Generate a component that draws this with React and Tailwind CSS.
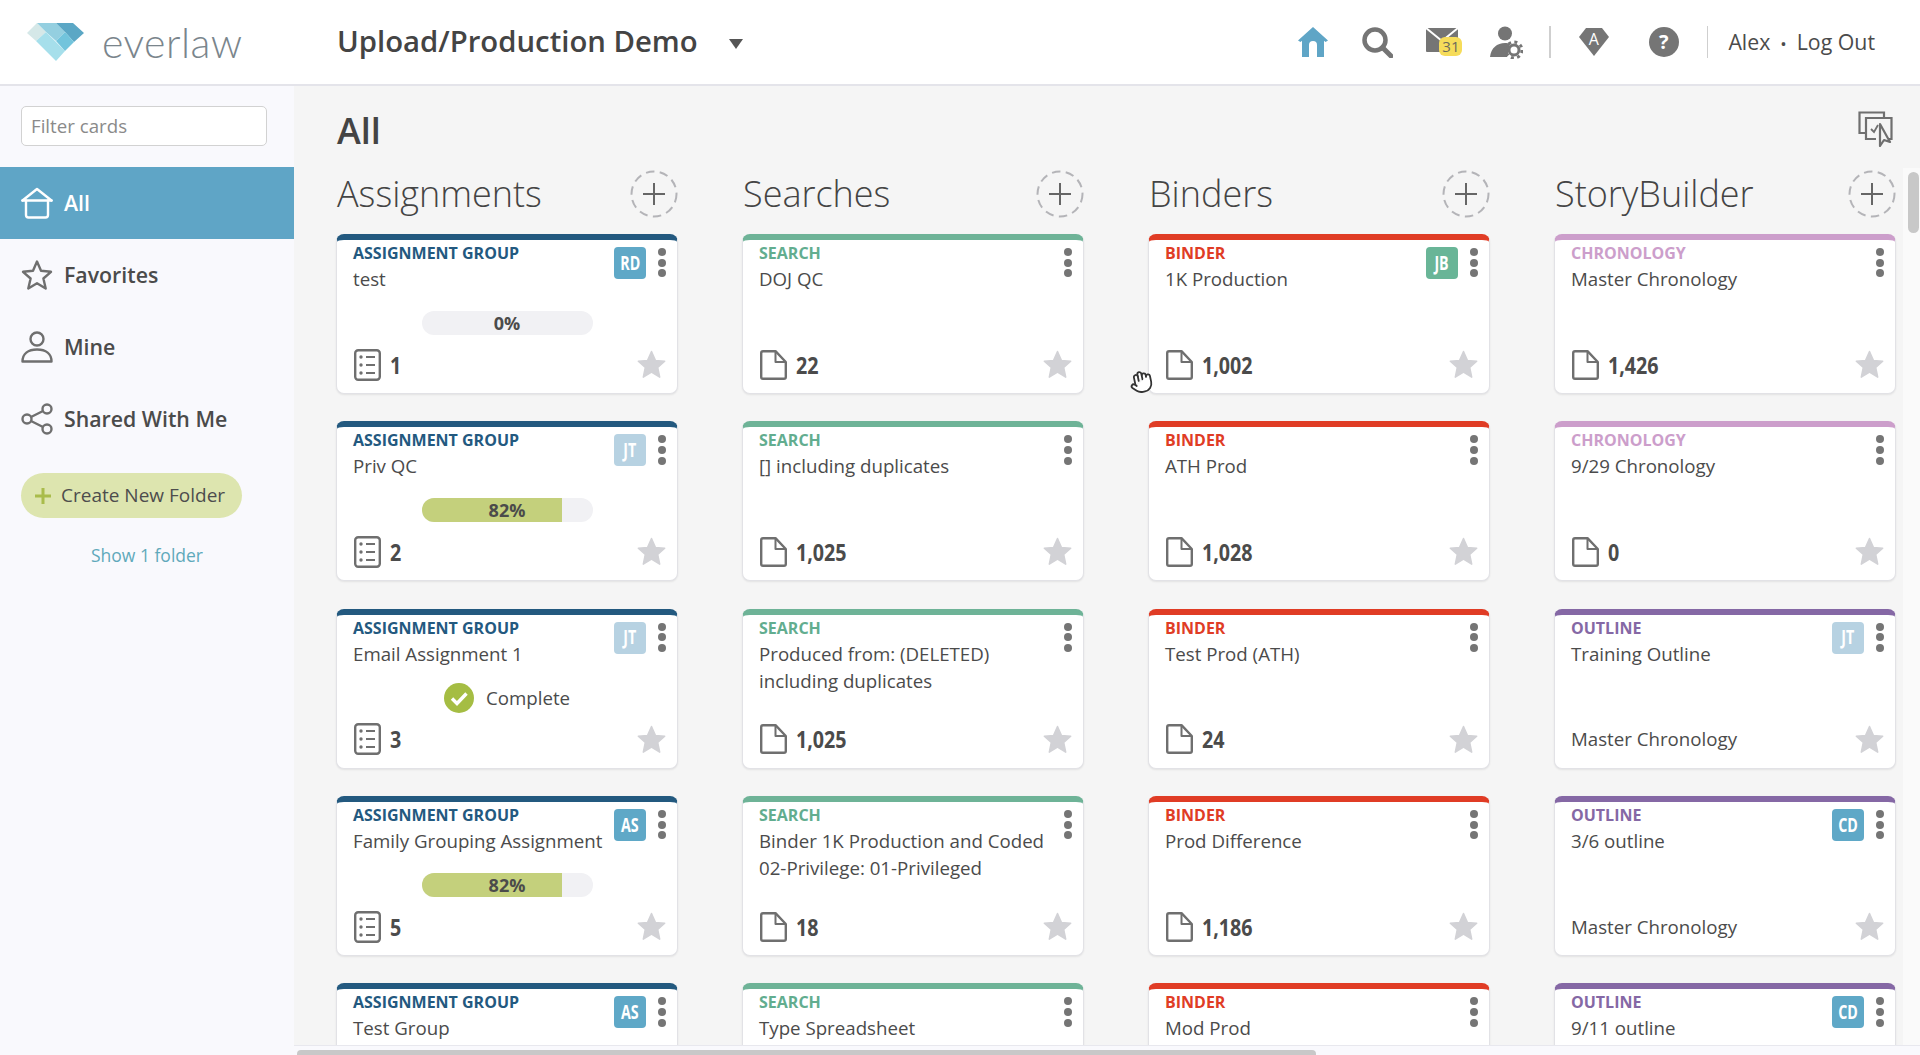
import { Hand } from 'lucide-react';

const columns = [
  {
    title: 'Assignments',
    cards: [
      { type: 'assignment', name: 'test', badge: 'RD', progress: 0, count: '1' },
      { type: 'assignment', name: 'Priv QC', badge: 'JT', progress: 82, count: '2' },
      { type: 'assignment', name: 'Email Assignment 1', badge: 'JT', complete: true, count: '3' },
      { type: 'assignment', name: 'Family Grouping Assignment', badge: 'AS', progress: 82, count: '5' },
      { type: 'assignment', name: 'Test Group', badge: 'AS' },
    ],
  },
  {
    title: 'Searches',
    cards: [
      { type: 'search', name: 'DOJ QC', count: '22' },
      { type: 'search', name: '[] including duplicates', count: '1,025' },
      { type: 'search', name: 'Produced from: (DELETED) including duplicates', count: '1,025' },
      { type: 'search', name: 'Binder 1K Production and Coded 02-Privilege: 01-Privileged', count: '18' },
      { type: 'search', name: 'Type Spreadsheet' },
    ],
  },
  {
    title: 'Binders',
    cards: [
      { type: 'binder', name: '1K Production', badge: 'JB', count: '1,002' },
      { type: 'binder', name: 'ATH Prod', count: '1,028' },
      { type: 'binder', name: 'Test Prod (ATH)', count: '24' },
      { type: 'binder', name: 'Prod Difference', count: '1,186' },
      { type: 'binder', name: 'Mod Prod' },
    ],
  },
  {
    title: 'StoryBuilder',
    cards: [
      { type: 'chronology', name: 'Master Chronology', count: '1,426' },
      { type: 'chronology', name: '9/29 Chronology', count: '0' },
      { type: 'outline', name: 'Training Outline', badge: 'JT', sub: 'Master Chronology' },
      { type: 'outline', name: '3/6 outline', badge: 'CD', sub: 'Master Chronology' },
      { type: 'outline', name: '9/11 outline', badge: 'CD' },
    ],
  },
];

const cardTypes = {
  assignment: { label: 'ASSIGNMENT GROUP', bar: 'border-t-[#23597f]', text: 'text-[#23597f]' },
  search: { label: 'SEARCH', bar: 'border-t-[#6eb397]', text: 'text-[#62ad8f]' },
  binder: { label: 'BINDER', bar: 'border-t-[#e03c25]', text: 'text-[#e03c25]' },
  chronology: { label: 'CHRONOLOGY', bar: 'border-t-[#cc9ecb]', text: 'text-[#cc9ecb]' },
  outline: { label: 'OUTLINE', bar: 'border-t-[#8568a5]', text: 'text-[#8568a5]' },
};

const badgeColors = {
  RD: 'bg-[#5fa8c7]',
  CD: 'bg-[#5fa8c7]',
  AS: 'bg-[#5fa8c7]',
  JT: 'bg-[#b7d2e2]',
  JB: 'bg-[#69b597]',
};

function Logo() {
  return (
    <svg width="57" height="38" viewBox="27 23 57 38">
      <polygon points="27,33 37,23 46,32 36,41" fill="#d5e8e8" />
      <polygon points="37,23 56,23 65,32 56,41 46,32" fill="#94cfe0" />
      <polygon points="56,23 73,23 84,33 74,42 65,32" fill="#5ba7c5" />
      <polygon points="36,41 46,32 65,51 56,61" fill="#a6dfeb" />
      <polygon points="56,41 65,32 74,42 65,51" fill="#72c4dc" />
    </svg>
  );
}

function ListIcon() {
  return (
    <svg width="27" height="32" viewBox="0 0 27 32" fill="none" stroke="#6f6f6f" strokeWidth="2.4">
      <rect x="1.2" y="1.2" width="24.6" height="29.6" rx="3" />
      <path d="M12 8h9M12 16h9M12 24h9" strokeWidth="2" />
      <circle cx="7" cy="8" r="1.7" fill="#6f6f6f" stroke="none" />
      <circle cx="7" cy="16" r="1.7" fill="#6f6f6f" stroke="none" />
      <circle cx="7" cy="24" r="1.7" fill="#6f6f6f" stroke="none" />
    </svg>
  );
}

function FileIcon() {
  return (
    <svg width="27" height="30" viewBox="0 0 27 30" fill="none" stroke="#6f6f6f" strokeWidth="2.4" strokeLinejoin="round">
      <path d="M3 1.2h12.5L25.8 12v15a1.8 1.8 0 0 1-1.8 1.8H3A1.8 1.8 0 0 1 1.2 27V3A1.8 1.8 0 0 1 3 1.2Z" />
      <path d="M15.5 1.2V12h10.3" strokeWidth="2" />
    </svg>
  );
}

function Star() {
  return (
    <svg width="29" height="29" viewBox="0 0 29 29" fill="#d2d2d6" stroke="#d2d2d6" strokeWidth="1.5" strokeLinejoin="round">
      <polygon points="14.5,1.5 18.4,10.4 27.7,11.2 20.7,17.5 22.7,27.2 14.5,22.2 6.3,27.2 8.3,17.5 1.3,11.2 10.6,10.4" />
    </svg>
  );
}

function Kebab() {
  return (
    <div className="flex w-[8px] flex-col gap-[2.6px] pt-[1px]">
      <span className="h-[8px] w-[8px] rounded-full bg-[#757575]" />
      <span className="h-[8px] w-[8px] rounded-full bg-[#757575]" />
      <span className="h-[8px] w-[8px] rounded-full bg-[#757575]" />
    </div>
  );
}

function AddButton() {
  return (
    <svg width="48" height="48" viewBox="0 0 48 48" fill="none">
      <circle cx="24" cy="24" r="22.5" stroke="#b4b4b8" strokeWidth="2" strokeDasharray="8.5 5.4" />
      <path d="M24 13v22M13 24h22" stroke="#666" strokeWidth="2" />
    </svg>
  );
}

function CheckCircle() {
  return (
    <svg width="30" height="30" viewBox="0 0 30 30">
      <circle cx="15" cy="15" r="15" fill="#a5bd43" />
      <path d="M8 15.5l5 5 9.5-10" fill="none" stroke="#fff" strokeWidth="3.4" />
    </svg>
  );
}

function Progress({ value }) {
  return (
    <div className="relative mx-auto h-[24px] w-[171px] overflow-hidden rounded-full bg-[#f1f1f4]">
      <div className="h-full bg-[#c4d07c]" style={{ width: `${value}%` }} />
      <div className="absolute inset-0 flex items-center justify-center text-[18px] font-bold text-[#4b4b4b]">{value}%</div>
    </div>
  );
}

function Card({ card }) {
  const t = cardTypes[card.type];
  return (
    <div className={`flex h-[160px] shrink-0 flex-col rounded-[8px] border border-t-[6px] border-[#e2e2e6] bg-white pl-[16px] pr-[11px] shadow-[0_1px_2px_rgba(0,0,0,0.08)] ${t.bar}`}>
      <div className="flex h-[71px] items-start">
        <div className="min-w-0 flex-1 pt-[2px]">
          <div className={`text-[16px] font-bold leading-[23px] ${t.text}`}>{t.label}</div>
          <div className="text-[18.700px] leading-[27px] text-[#4b4b4b]">{card.name}</div>
        </div>
        <div className="flex shrink-0 items-start gap-[12px] pt-[7px] pl-[6px]">
          {card.badge && (
            <div className={`flex h-[32px] w-[32px] items-center justify-center rounded-[4px] text-[19px] font-bold text-white ${badgeColors[card.badge]}`}>
              <span className="scale-x-[0.75]">{card.badge}</span>
            </div>
          )}
          <Kebab />
        </div>
      </div>
      <div className="h-[24px] pr-[5px]">
        {card.progress !== undefined && <Progress value={card.progress} />}
        {card.complete && (
          <div className="flex h-full items-center justify-center gap-[12px]">
            <CheckCircle />
            <span className="text-[18.700px] text-[#4b4b4b]">Complete</span>
          </div>
        )}
      </div>
      {(card.count || card.sub) && (
        <div className="mt-[13px] flex h-[33px] items-center justify-between">
          {card.sub ? (
            <span className="text-[18.700px] text-[#4b4b4b]">{card.sub}</span>
          ) : (
            <div className="flex items-center gap-[9px] pl-[1px]">
              {card.type === 'assignment' ? <ListIcon /> : <FileIcon />}
              <span className="origin-left scale-x-[0.82] text-[24px] font-bold leading-none text-[#4b4b4b]">{card.count}</span>
            </div>
          )}
          <Star />
        </div>
      )}
    </div>
  );
}

function HomeNav() {
  return (
    <svg width="32" height="32" viewBox="0 0 32 32" fill="none" stroke="#fff" strokeWidth="2.4" strokeLinejoin="round" strokeLinecap="round">
      <path d="M1.5 13.5 16 2l14.500 11.500" />
      <path d="M1.500 13.500h29" />
      <path d="M5 13.500V28a2.500 2.500 0 0 0 2.500 2.500h17A2.500 2.500 0 0 0 27 28V13.500" />
    </svg>
  );
}

function StarNav() {
  return (
    <svg width="32" height="32" viewBox="0 0 32 32" fill="none" stroke="#6f6f6f" strokeWidth="2.4" strokeLinejoin="round">
      <polygon points="16,2.500 20,11.800 30,12.800 22.400,19.500 24.700,29.500 16,24.200 7.300,29.500 9.600,19.500 2,12.800 12,11.800" />
    </svg>
  );
}

function PersonNav() {
  return (
    <svg width="32" height="32" viewBox="0 0 32 32" fill="none" stroke="#6f6f6f" strokeWidth="2.4">
      <circle cx="16" cy="8" r="6.500" />
      <path d="M1.500 30.500C1.500 23 7 18.500 16 18.500S30.500 23 30.500 30.500Z" strokeLinejoin="round" />
    </svg>
  );
}

function ShareNav() {
  return (
    <svg width="32" height="32" viewBox="0 0 32 32" fill="none" stroke="#6f6f6f" strokeWidth="2.4">
      <circle cx="6" cy="16" r="4.500" />
      <circle cx="26" cy="6" r="4.500" />
      <circle cx="26" cy="26" r="4.500" />
      <path d="M10 14 22 8M10 18l12 6" />
    </svg>
  );
}

const navItems = [
  { label: 'All', icon: <HomeNav />, active: true },
  { label: 'Favorites', icon: <StarNav /> },
  { label: 'Mine', icon: <PersonNav /> },
  { label: 'Shared With Me', icon: <ShareNav /> },
];

function Sidebar() {
  return (
    <aside className="flex w-[294px] shrink-0 flex-col bg-[#f9f9fd]">
      <div className="px-[21px] pt-[20px]">
        <div className="flex h-[40px] w-[246px] items-center rounded-[5px] border border-[#d2d2d2] bg-white pl-[9px] text-[18.700px] text-[#8a8a8a]">Filter cards</div>
      </div>
      <nav className="mt-[21px]">
        {navItems.map((n) => (
          <div key={n.label} className={`flex h-[72px] items-center gap-[11px] pl-[21px] text-[21.300px] font-semibold ${n.active ? 'bg-[#5fa5c6] text-white' : 'text-[#4b4b4b]'}`}>
            {n.icon}
            {n.label}
          </div>
        ))}
      </nav>
      <div className="mt-[18px] ml-[21px] flex h-[45px] w-[221px] items-center gap-[10px] rounded-full bg-[#dde5af] pl-[14px] text-[19px] text-[#4d4d4d]">
        <svg width="16" height="16" viewBox="0 0 16 16" stroke="#a9bc4b" strokeWidth="3"><path d="M8 0v16M0 8h16" /></svg>
        Create New Folder
      </div>
      <div className="mt-[24px] text-center text-[17.500px] text-[#5fa9bb]">Show 1 folder</div>
    </aside>
  );
}

function TopIcons() {
  return (
    <div className="ml-auto flex items-center pr-[45px]">
      <svg width="30" height="30" viewBox="0 0 30 30" fill="#5fa5c6">
        <path d="M15 0 30 13.500 27.500 15 26 13.800V30H19V18a4 4 0 0 0-8 0v12H4V13.800L2.500 15 0 13.500Z" />
      </svg>
      <svg className="ml-[34px]" width="31" height="31" viewBox="0 0 31 31" fill="none" stroke="#757575">
        <circle cx="13" cy="13" r="10.500" strokeWidth="4.500" />
        <path d="M20.500 20.500 29 29" strokeWidth="5" strokeLinecap="round" />
      </svg>
      <div className="relative ml-[33px] h-[32px] w-[36px]">
        <svg className="absolute top-[2px] left-0" width="32" height="24" viewBox="0 0 32 24">
          <rect width="32" height="24" fill="#757575" rx="1" />
          <path d="M0 0 16 13 32 0" fill="none" stroke="#fff" strokeWidth="2" />
        </svg>
        <div className="absolute top-[11px] left-[13px] flex h-[19px] w-[23px] items-center justify-center rounded-[6px] bg-[#f6dc5a] text-[15px] text-[#6f6a5a]">31</div>
      </div>
      <svg className="ml-[28px]" width="33" height="33" viewBox="0 0 33 33">
        <circle cx="15" cy="7.500" r="7" fill="#757575" />
        <path d="M0 31C1 22 7 17 15 17c2 0 3.500.3 5 1l-3 13Z" fill="#757575" />
        <circle cx="24" cy="24" r="5" fill="none" stroke="#757575" strokeWidth="3" />
        <circle cx="24" cy="24" r="8" fill="none" stroke="#757575" strokeWidth="3" strokeDasharray="3 3.300" />
      </svg>
      <div className="ml-[26px] h-[32px] w-[1.500px] bg-[#cfcfcf]" />
      <div className="relative ml-[28px] h-[28px] w-[30px]">
        <svg className="absolute inset-0" width="30" height="28" viewBox="0 0 30 28">
          <polygon points="7,0 23,0 30,9 15,28 0,9" fill="#757575" />
        </svg>
        <span className="absolute inset-x-0 top-[1px] text-center text-[16px] leading-[20px] text-white">A</span>
      </div>
      <div className="ml-[40px] flex h-[30px] w-[30px] items-center justify-center rounded-full bg-[#757575] text-[20px] font-bold text-white">?</div>
      <div className="ml-[28px] h-[32px] w-[1.500px] bg-[#cfcfcf]" />
      <div className="ml-[20px] text-[21.300px] text-[#4b4b4b]">
        Alex
        <span className="mx-[10px] text-[17px]">•</span>
        Log Out
      </div>
    </div>
  );
}

export default function App() {
  return (
    <div className="relative flex h-[1055px] w-[1920px] flex-col overflow-hidden bg-white font-['Open_Sans',sans-serif]">
      <header className="flex h-[86px] shrink-0 items-center border-b-[2px] border-[#e4e4ea] bg-white">
        <div className="flex w-[337px] shrink-0 items-center pl-[27px]">
          <Logo />
          <span className="ml-[18px] font-['Lato',sans-serif] text-[41px] font-light leading-none tracking-[0.5px] text-[#7a858c]">everlaw</span>
        </div>
        <h1 className="text-[29.300px] font-semibold text-[#444]">Upload/Production Demo</h1>
        <svg className="ml-[31px] mt-[4px]" width="14" height="10" viewBox="0 0 14 10"><polygon points="0,0 14,0 7,10" fill="#555" /></svg>
        <TopIcons />
      </header>
      <div className="flex min-h-0 flex-1">
        <Sidebar />
        <main className="relative flex min-w-0 flex-1 flex-col overflow-hidden bg-[#f5f5f5]">
          <div className="flex h-[75px] shrink-0 items-start justify-between pr-[27px] pl-[43px]">
            <div className="mt-[20px] text-[36px] font-semibold leading-[49px] text-[#444]">All</div>
            <svg className="mt-[25px]" width="35" height="36" viewBox="0 0 35 36" fill="none" stroke="#6f6f6f" strokeWidth="2.200">
              <path d="M8 22H1.500V1.500H26V7" />
              <path d="M18 28H8V7h25.500v21h-3" />
              <path d="M13 18l3 3 4-7" strokeWidth="1.800" />
              <path d="M22 13l10 18-6-2-4 6Z" strokeLinejoin="round" fill="#f5f5f5" />
            </svg>
          </div>
          <div className="flex min-h-0 flex-1 gap-[64px] pl-[42px]">
            {columns.map((col) => (
              <section key={col.title} className="w-[342px] shrink-0">
                <div className="flex h-[73px] items-center justify-between pb-[8px]">
                  <h2 className="ml-[1px] text-[36px] font-light text-[#444]">{col.title}</h2>
                  <AddButton />
                </div>
                <div className="flex flex-col gap-[27.350px]">
                  {col.cards.map((c) => (
                    <Card key={c.name} card={c} />
                  ))}
                </div>
              </section>
            ))}
          </div>
          <div className="absolute top-[82px] right-0 bottom-[10px] w-[17px] bg-[#fafafa] pt-[4px] pl-[5px]">
            <div className="h-[61px] w-[11px] rounded-full bg-[#c8c8c8]" />
          </div>
          <div className="absolute inset-x-0 bottom-0 h-[10px] border-t border-[#e8e8ee] bg-[#f9f9fd] pt-[4px] pl-[3px]">
            <div className="h-[6px] w-[1019px] rounded-t-[4px] bg-[#c8c8c8]" />
          </div>
        </main>
      </div>
      <Hand className="absolute top-[370px] left-[1129px] -rotate-12 fill-white text-[#333]" size={24} strokeWidth={1.800} />
    </div>
  );
}
